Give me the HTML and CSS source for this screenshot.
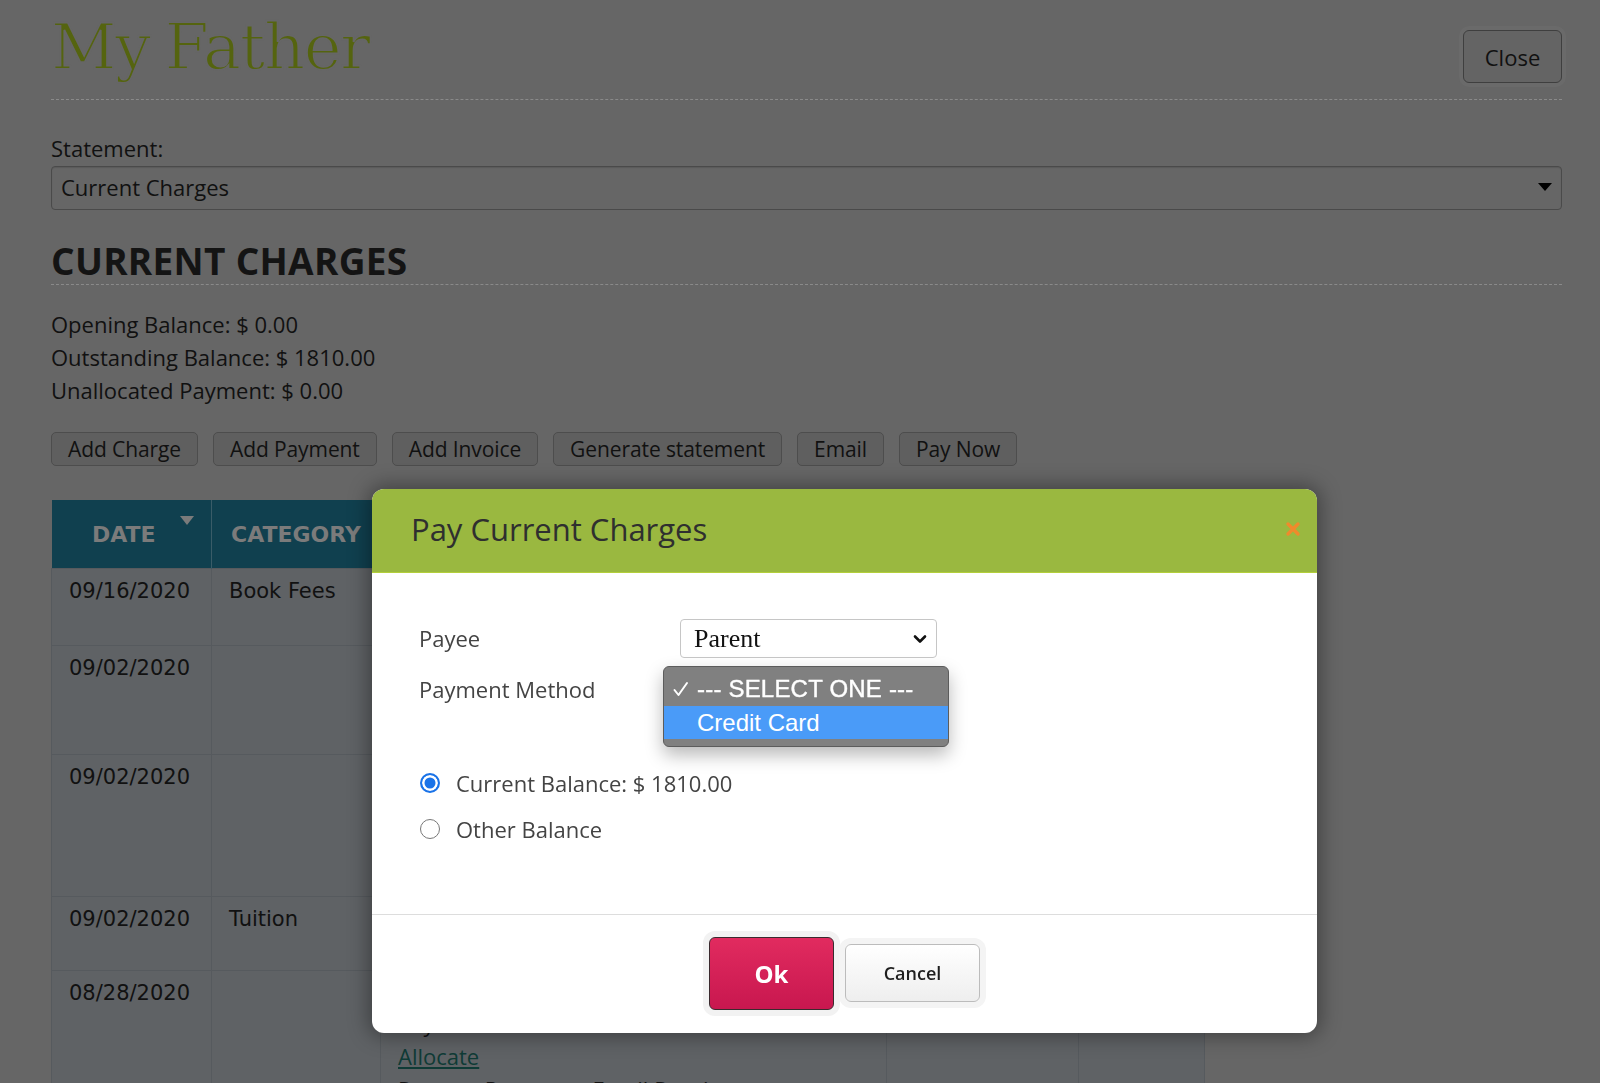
FILE: index.html
```html
<!DOCTYPE html>
<html lang="en">
<head>
<meta charset="utf-8">
<title>My Father</title>
<link rel="stylesheet" href="styles.css">
</head>
<body>
<div class="page">
  <header class="page-head">
    <h1 class="title">My Father</h1>
    <button class="btn-close" type="button">Close</button>
  </header>

  <div class="statement">
    <div class="stmt-label">Statement:</div>
    <div class="select-lg">
      <span>Current Charges</span>
      <svg class="tri" width="14" height="8" viewBox="0 0 14 8"><path d="M0 0h14L7 8z" fill="#000"/></svg>
    </div>
  </div>

  <h2 class="section-title">CURRENT CHARGES</h2>

  <div class="balances">
    <div>Opening Balance: $ 0.00</div>
    <div>Outstanding Balance: $ 1810.00</div>
    <div>Unallocated Payment: $ 0.00</div>
  </div>

  <div class="actions">
    <button class="btn" type="button">Add Charge</button>
    <button class="btn" type="button">Add Payment</button>
    <button class="btn" type="button">Add Invoice</button>
    <button class="btn" type="button">Generate statement</button>
    <button class="btn" type="button">Email</button>
    <button class="btn" type="button">Pay Now</button>
  </div>

  <table class="ledger">
    <colgroup>
      <col class="c-date"><col class="c-cat"><col class="c-desc"><col class="c-amt"><col class="c-bal">
    </colgroup>
    <thead>
      <tr>
        <th class="th-date">DATE<svg class="sort" width="14" height="9" viewBox="0 0 14 9"><path d="M0 0h14L7 9z" fill="#7b7b7b"/></svg></th>
        <th>CATEGORY</th>
        <th>DESCRIPTION</th>
        <th>AMOUNT</th>
        <th>BALANCE</th>
      </tr>
    </thead>
    <tbody>
      <tr class="r1"><td>09/16/2020</td><td>Book Fees</td><td></td><td></td><td></td></tr>
      <tr class="r2"><td>09/02/2020</td><td></td><td></td><td></td><td></td></tr>
      <tr class="r3"><td>09/02/2020</td><td></td><td></td><td></td><td></td></tr>
      <tr class="r4"><td>09/02/2020</td><td>Tuition</td><td></td><td></td><td></td></tr>
      <tr class="r5"><td>08/28/2020</td><td></td>
        <td class="desc">
          <div class="desc-lines">
            <div>Paid by Parent</div>
            <div>Payment</div>
            <div><a class="link" href="#">Allocate</a></div>
            <div>Reverse Payment &nbsp; Email Receipt</div>
          </div>
        </td><td></td><td></td></tr>
    </tbody>
  </table>
</div>

<div class="modal" role="dialog" aria-label="Pay Current Charges">
  <div class="modal-head">
    <h3 class="modal-title">Pay Current Charges</h3>
    <button class="modal-x" type="button" aria-label="Close">
      <svg width="16" height="16" viewBox="0 0 16 16"><path d="M3 3L13 13M13 3L3 13" stroke="#f08a2c" stroke-width="3.4" stroke-linecap="round"/></svg>
    </button>
  </div>
  <div class="modal-body">
    <div class="form-grid">
      <div class="f-label">Payee</div>
      <div class="select-sm">
        <span>Parent</span>
        <svg class="chev" width="14" height="10" viewBox="0 0 14 10"><path d="M2 2.5L7 7.5L12 2.5" stroke="#111" stroke-width="2.6" fill="none" stroke-linecap="round" stroke-linejoin="round"/></svg>
      </div>
      <div class="f-label">Payment Method</div>
      <div class="pm-field">
        <div class="select-sm"></div>
        <ul class="dropdown">
          <li class="opt opt-cur">
            <svg class="chk" width="18" height="18" viewBox="0 0 18 18"><path d="M2.5 10L6.5 15L15 3" stroke="#fff" stroke-width="2" fill="none" stroke-linecap="round" stroke-linejoin="round"/></svg>
            --- SELECT ONE ---
          </li>
          <li class="opt opt-hl">Credit Card</li>
        </ul>
      </div>
    </div>
    <div class="radios">
      <label class="radio-row"><input type="radio" name="bal" checked><span>Current Balance: $ 1810.00</span></label>
      <label class="radio-row"><input type="radio" name="bal"><span>Other Balance</span></label>
    </div>
  </div>
  <div class="modal-foot">
    <button class="btn-ok" type="button">Ok</button>
    <button class="btn-cancel" type="button">Cancel</button>
  </div>
</div>
</body>
</html>
```

FILE: styles.css
```css
html, body {
  margin: 0;
  height: 100%;
  overflow: hidden;
}
body {
  background: #666666;
  font-family: "Open Sans", "Liberation Sans", sans-serif;
  color: #111;
}
.page {
  padding: 0 38px 0 51px;
}

/* header */
.page-head {
  display: flex;
  justify-content: space-between;
  align-items: flex-start;
  height: 99px;
  border-bottom: 1px dashed #8a8a8a;
}
.title {
  margin: 15px 0 0;
  font-family: "DejaVu Serif", "Liberation Serif", serif;
  font-weight: normal;
  font-size: 64px;
  line-height: 64px;
  letter-spacing: -1.5px;
  word-spacing: -4px;
  color: #55640f;
  -webkit-text-stroke: 1.8px #666666;
}
.btn-close {
  margin-top: 30px;
  width: 99px;
  height: 53px;
  padding: 0;
  background: #646464;
  border: 1px solid #3f3f3f;
  border-radius: 6px;
  box-shadow: 0 0 0 4px #6a6a6a;
  font-family: "Open Sans", sans-serif;
  font-size: 22px;
  color: #111;
}

/* statement */
.stmt-label {
  margin-top: 35px;
  font-size: 22px;
  line-height: 26px;
}
.select-lg {
  margin-top: 5px;
  height: 44px;
  box-sizing: border-box;
  border: 1px solid #4a4a4a;
  border-radius: 4px;
  box-shadow: inset 0 1px 1px rgba(0,0,0,0.12);
  display: flex;
  align-items: center;
  justify-content: space-between;
  padding: 0 9px 2px 9px;
  font-size: 22px;
}
.select-lg .tri { display: block; }

.section-title {
  margin: 31px 0 0;
  padding-bottom: 3px;
  font-size: 37px;
  line-height: 40px;
  font-weight: 700;
  letter-spacing: 0.3px;
  color: #141414;
  border-bottom: 1px dashed #8a8a8a;
}

.balances {
  margin-top: 23px;
  font-size: 22px;
  line-height: 33px;
}

.actions {
  margin-top: 25px;
  display: flex;
  gap: 15px;
}
.btn {
  height: 34px;
  padding: 0 16px;
  background: #5f5f5f;
  border: 1px solid #4d4d4d;
  border-radius: 5px;
  font-family: "Open Sans", sans-serif;
  font-size: 21px;
  letter-spacing: -0.1px;
  line-height: 24px;
  color: #111;
}

/* table */
.ledger {
  margin-top: 34px;
  width: 1153px;
  table-layout: fixed;
  border-collapse: collapse;
}
.c-date { width: 160px; }
.c-cat { width: 169px; }
.c-desc { width: 506px; }
.c-amt { width: 192px; }
.c-bal { width: 126px; }
.ledger th {
  position: relative;
  height: 68px;
  padding: 0;
  background: #10404f;
  border-left: 1px solid #3a5c68;
  font-family: "DejaVu Sans", sans-serif;
  font-weight: bold;
  font-size: 22px;
  color: #7b7b7b;
  text-align: center;
  white-space: nowrap;
  overflow: hidden;
}
.ledger th:first-child { border-left: 0; }
.ledger .th-date { padding-right: 15px; }
.sort {
  position: absolute;
  right: 17px;
  top: 16px;
}
.ledger td {
  vertical-align: top;
  padding: 7px 17px;
  background: #5f6265;
  border: 1px solid #565a5e;
  font-family: "DejaVu Sans", sans-serif;
  font-size: 21px;
  line-height: 30px;
  color: #111;
  white-space: nowrap;
}
.ledger td.desc { padding-top: 3px; }
.r1 { height: 77px; }
.r2 { height: 109px; }
.r3 { height: 142px; }
.r4 { height: 74px; }
.r5 { height: 160px; }
.desc-lines {
  font-family: "Open Sans", sans-serif;
  font-size: 22px;
  line-height: 33px;
}
.link {
  color: #0f3b36;
  text-decoration: underline;
}

/* modal */
.modal {
  position: fixed;
  left: 372px;
  top: 489px;
  width: 945px;
  height: 544px;
  background: #fff;
  border-radius: 12px;
  overflow: hidden;
  box-shadow: 0 0 20px 4px rgba(0,0,0,0.35);
  display: flex;
  flex-direction: column;
}
.modal-head {
  height: 84px;
  box-sizing: border-box;
  background: #9ab840;
  border-bottom: 1px solid #b3cf3b;
  display: flex;
  align-items: center;
  justify-content: space-between;
  padding: 0 16px 0 39px;
}
.modal-title {
  margin: -4px 0 0;
  font-size: 31px;
  font-weight: normal;
  color: #2f2f2f;
  line-height: 40px;
}
.modal-x {
  background: none;
  border: 0;
  padding: 0;
  margin-top: -4px;
  display: flex;
}
.modal-body {
  height: 341px;
  box-sizing: border-box;
  padding: 46px 47px 0;
}
.form-grid {
  display: grid;
  grid-template-columns: 261px 257px;
  row-gap: 12px;
  align-items: center;
}
.f-label {
  font-size: 22px;
  color: #444;
  margin-top: -2px;
}
.select-sm {
  height: 39px;
  box-sizing: border-box;
  border: 1px solid #c6c6c6;
  border-radius: 4px;
  display: flex;
  align-items: center;
  justify-content: space-between;
  padding: 0 9px 0 13px;
  font-family: "Liberation Serif", "Times New Roman", serif;
  font-size: 26px;
  color: #111;
}
.chev { display: block; }
.pm-field {
  position: relative;
}
.dropdown {
  position: absolute;
  left: -17px;
  top: -4px;
  width: 286px;
  margin: 0;
  padding: 5px 0 7px;
  list-style: none;
  box-sizing: border-box;
  background: #808080;
  border: 1px solid #5c5c5c;
  border-radius: 6px;
  box-shadow: 0 8px 18px rgba(0,0,0,0.28);
  font-family: "Liberation Sans", Arial, sans-serif;
  font-size: 24px;
  color: #fff;
}
.opt {
  position: relative;
  padding-left: 33px;
}
.opt-cur {
  height: 34px;
  line-height: 34px;
  letter-spacing: 0.2px;
  -webkit-text-stroke: 0.4px #fff;
}
.opt-hl {
  height: 33px;
  line-height: 33px;
  background: #4a9bf8;
}
.chk {
  position: absolute;
  left: 8px;
  top: 8px;
}
.radios {
  margin-top: 59px;
  display: flex;
  flex-direction: column;
  gap: 16px;
}
.radio-row {
  display: flex;
  align-items: center;
  gap: 16px;
  height: 30px;
  font-size: 22px;
  color: #444;
}
.radio-row input {
  appearance: none;
  -webkit-appearance: none;
  margin: 0 0 0 1px;
  width: 20px;
  height: 20px;
  border-radius: 50%;
  border: 1.5px solid #777;
  background: #fff;
  box-sizing: border-box;
}
.radio-row input:checked {
  border: 2px solid #1a73e8;
  background: #1a73e8;
  box-shadow: inset 0 0 0 2.5px #fff;
}
.modal-foot {
  flex: 1;
  border-top: 1px solid #dddddd;
  display: flex;
  justify-content: center;
  align-items: center;
  gap: 11px;
  padding-bottom: 2px;
}
.btn-ok {
  width: 125px;
  height: 73px;
  border: 1px solid #3a2a2e;
  border-radius: 6px;
  background: linear-gradient(#e12b5f, #c8174f);
  box-shadow: 0 0 0 6px #f2f2f2;
  font-family: "Open Sans", sans-serif;
  font-weight: 700;
  font-size: 24px;
  color: #fff;
}
.btn-cancel {
  width: 135px;
  height: 58px;
  border: 1px solid #bcbcbc;
  border-radius: 6px;
  background: linear-gradient(#ffffff, #eeeeee);
  box-shadow: 0 0 0 6px #f4f4f4;
  font-family: "Open Sans", sans-serif;
  font-weight: 600;
  font-size: 18px;
  color: #1e1e1e;
}
```
